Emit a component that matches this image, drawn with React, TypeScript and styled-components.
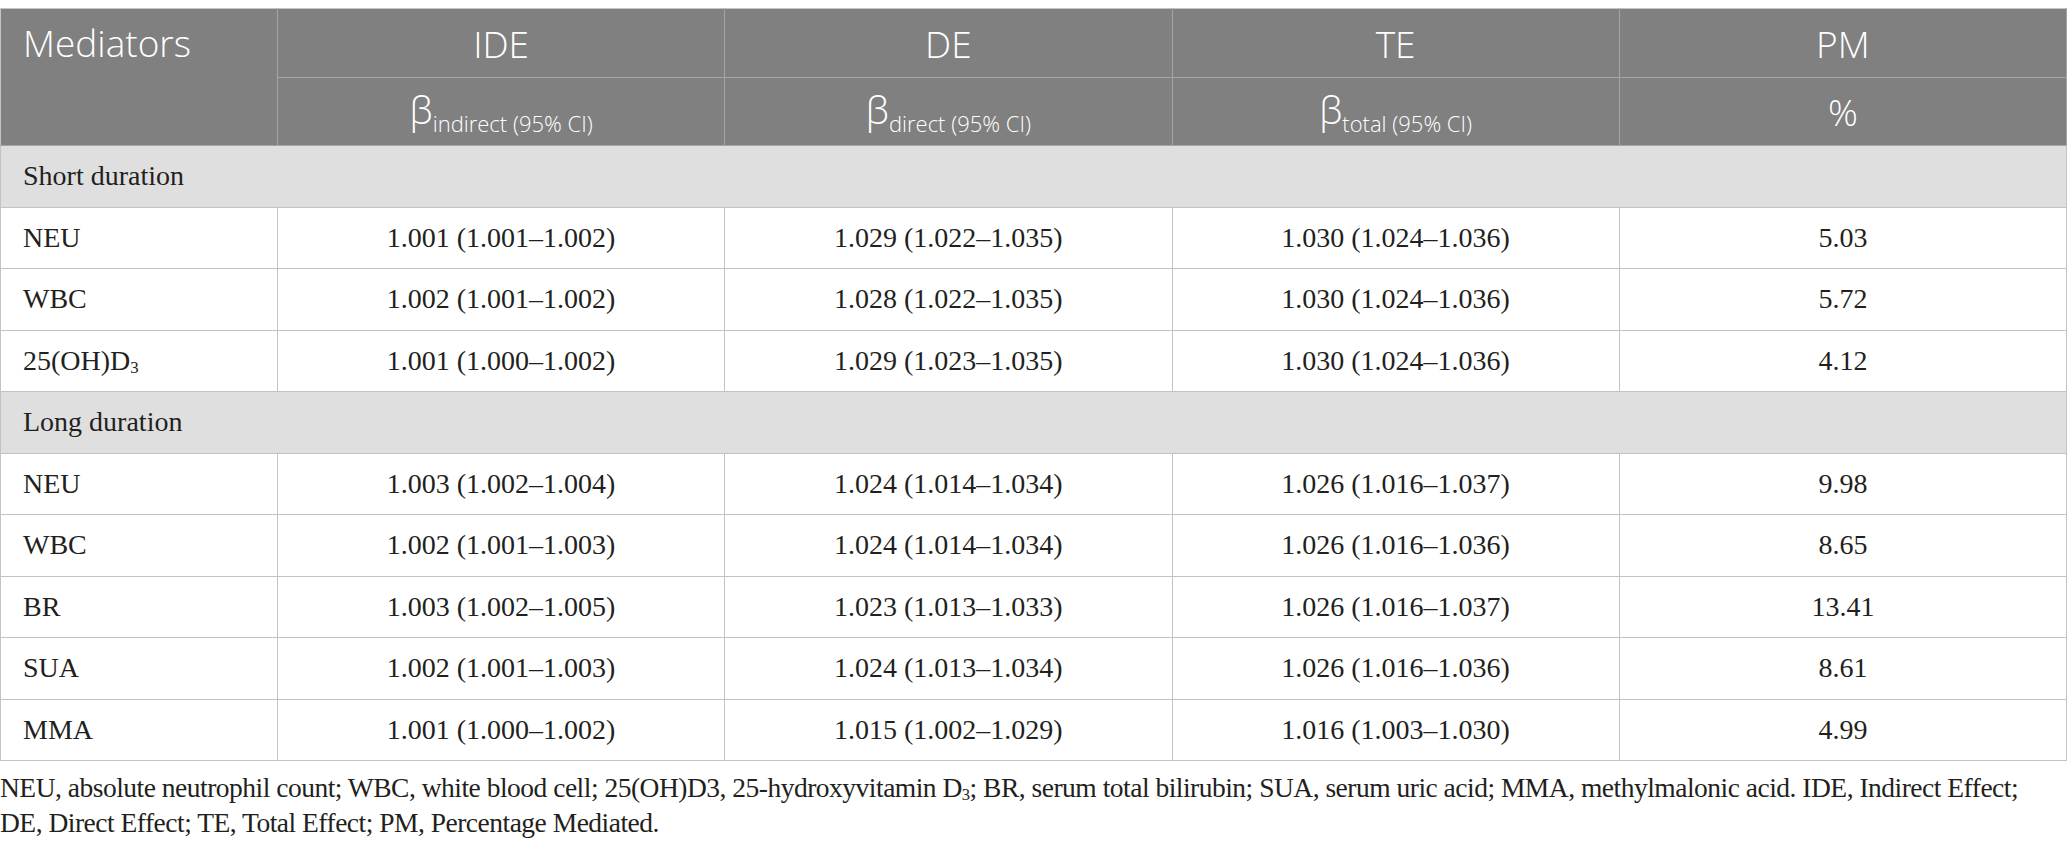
import React from 'react'
import styled, { createGlobalStyle } from 'styled-components'

type Row = { name: React.ReactNode, ide: string, de: string, te: string, pm: string }

type Section = { title: string, rows: Row[] }

const GlobalStyle = createGlobalStyle`
  body {
    margin: 0;
    background: #ffffff;
  }
`

const Page = styled.div`
  padding-top: 8px;
`

const Table = styled.table`
  width: 100%;
  table-layout: fixed;
  border-collapse: collapse;
  border: 1px solid #c3c3c3;
`

const HeadBase = styled.th`
  background: #7f807f;
  color: #ffffff;
  font-family: "Open Sans", "Noto Sans", sans-serif;
  font-weight: 300;
  border: 1px solid #a4a5a4;
  padding: 0;
`

const MediatorsHead = styled(HeadBase)`
  text-align: left;
  vertical-align: top;
  padding-left: 22px;
  font-size: 37px;
  line-height: 68px;
  border-top-color: #c3c3c3;
  border-left-color: #c3c3c3;
`

const TopHead = styled(HeadBase)`
  height: 68px;
  font-size: 37px;
  text-align: center;
  vertical-align: middle;
  border-top-color: #c3c3c3;
`

const SubHead = styled(HeadBase)`
  height: 67px;
  font-size: 37px;
  text-align: center;
  vertical-align: middle;
  line-height: 1;
`

const Beta = styled.span`
  font-size: 38px;
`

const SubLabel = styled.span`
  font-size: 22px;
  vertical-align: -8px;
`

const Sub = styled.sub`
  font-size: 0.6em;
  vertical-align: -0.2em;
  line-height: 0;
`

const BodyCell = styled.td`
  height: 60.5px;
  padding: 0 22px;
  font-family: "Liberation Serif", "Times New Roman", serif;
  font-size: 28px;
  color: #231f20;
  border: 1px solid #c3c3c3;
  vertical-align: middle;
`

const SectionCell = styled(BodyCell)`
  background: #e0dfe0;
  text-align: left;
`

const NameCell = styled(BodyCell)`
  text-align: left;
`

const ValueCell = styled(BodyCell)`
  text-align: center;
`

const Footnote = styled.p`
  margin: 9px 0 0;
  font-family: "Liberation Serif", "Times New Roman", serif;
  font-size: 27.5px;
  letter-spacing: -0.5px;
  line-height: 35px;
  white-space: nowrap;
  color: #231f20;
`

const sections: Section[] = [
  {
    title: 'Short duration',
    rows: [
      { name: 'NEU', ide: '1.001 (1.001–1.002)', de: '1.029 (1.022–1.035)', te: '1.030 (1.024–1.036)', pm: '5.03' },
      { name: 'WBC', ide: '1.002 (1.001–1.002)', de: '1.028 (1.022–1.035)', te: '1.030 (1.024–1.036)', pm: '5.72' },
      { name: <>25(OH)D<Sub>3</Sub></>, ide: '1.001 (1.000–1.002)', de: '1.029 (1.023–1.035)', te: '1.030 (1.024–1.036)', pm: '4.12' },
    ],
  },
  {
    title: 'Long duration',
    rows: [
      { name: 'NEU', ide: '1.003 (1.002–1.004)', de: '1.024 (1.014–1.034)', te: '1.026 (1.016–1.037)', pm: '9.98' },
      { name: 'WBC', ide: '1.002 (1.001–1.003)', de: '1.024 (1.014–1.034)', te: '1.026 (1.016–1.036)', pm: '8.65' },
      { name: 'BR', ide: '1.003 (1.002–1.005)', de: '1.023 (1.013–1.033)', te: '1.026 (1.016–1.037)', pm: '13.41' },
      { name: 'SUA', ide: '1.002 (1.001–1.003)', de: '1.024 (1.013–1.034)', te: '1.026 (1.016–1.036)', pm: '8.61' },
      { name: 'MMA', ide: '1.001 (1.000–1.002)', de: '1.015 (1.002–1.029)', te: '1.016 (1.003–1.030)', pm: '4.99' },
    ],
  },
]

const effects = [
  { label: 'IDE', sub: 'indirect' },
  { label: 'DE', sub: 'direct' },
  { label: 'TE', sub: 'total' },
]

const App: React.FC = () => {
  return (
    <Page>
      <GlobalStyle />
      <Table>
        <colgroup>
          <col style={{ width: 277 }} />
          <col />
          <col />
          <col />
          <col />
        </colgroup>
        <thead>
          <tr>
            <MediatorsHead rowSpan={2}>Mediators</MediatorsHead>
            {effects.map(e => <TopHead key={e.label}>{e.label}</TopHead>)}
            <TopHead>PM</TopHead>
          </tr>
          <tr>
            {effects.map(e => (
              <SubHead key={e.label}>
                <Beta>β</Beta><SubLabel>{e.sub} (95% CI)</SubLabel>
              </SubHead>
            ))}
            <SubHead>%</SubHead>
          </tr>
        </thead>
        <tbody>
          {sections.map(section => (
            <React.Fragment key={section.title}>
              <tr>
                <SectionCell colSpan={5}>{section.title}</SectionCell>
              </tr>
              {section.rows.map((row, i) => (
                <tr key={i}>
                  <NameCell>{row.name}</NameCell>
                  <ValueCell>{row.ide}</ValueCell>
                  <ValueCell>{row.de}</ValueCell>
                  <ValueCell>{row.te}</ValueCell>
                  <ValueCell>{row.pm}</ValueCell>
                </tr>
              ))}
            </React.Fragment>
          ))}
        </tbody>
      </Table>
      <Footnote>
        NEU, absolute neutrophil count; WBC, white blood cell; 25(OH)D3, 25-hydroxyvitamin D<Sub>3</Sub>; BR, serum total bilirubin; SUA, serum uric acid; MMA, methylmalonic acid. IDE, Indirect Effect;
        <br />
        DE, Direct Effect; TE, Total Effect; PM, Percentage Mediated.
      </Footnote>
    </Page>
  )
}

export default App
